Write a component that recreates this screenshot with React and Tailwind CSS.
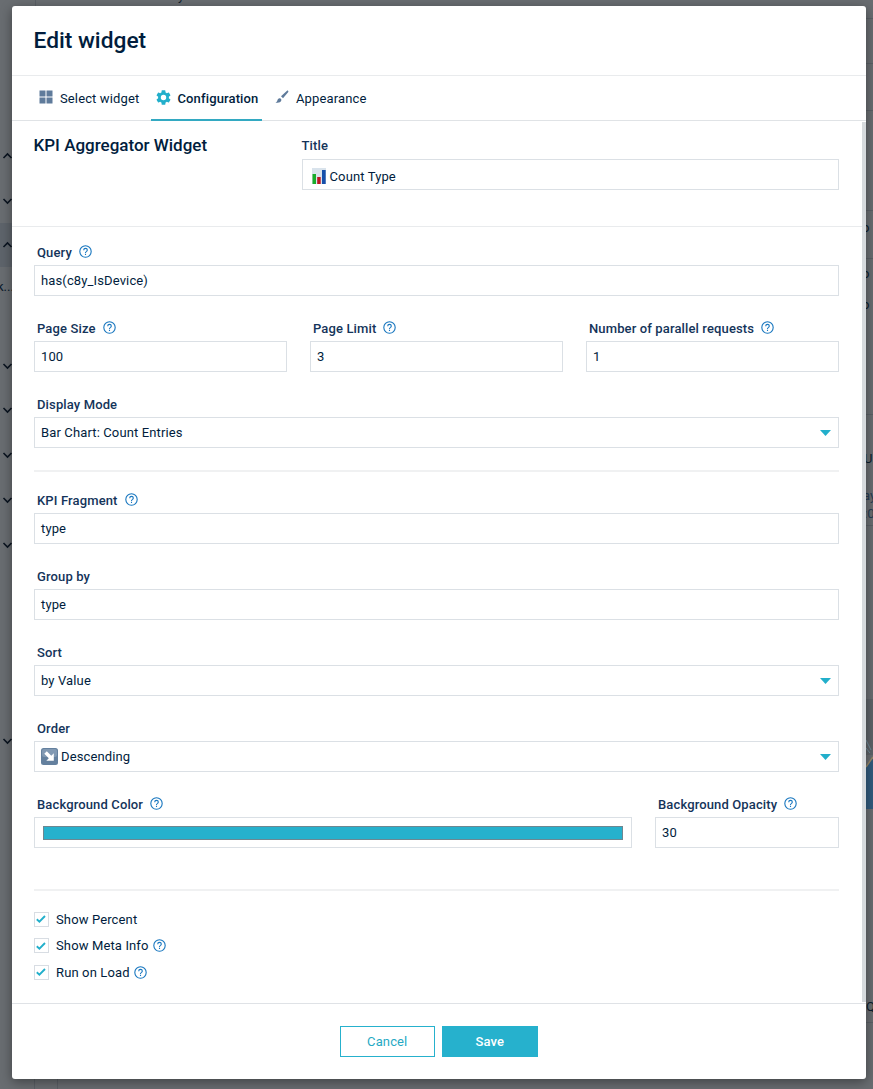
import React from "react";

function Help({ className = "" }) {
  return (
    <svg viewBox="0 0 13 13" className={`h-[13px] w-[13px] shrink-0 ${className}`} fill="none" stroke="#1776BF" strokeWidth="1.1">
      <circle cx="6.5" cy="6.5" r="5.7" />
      <path d="M4.7 5.2c0-1.1.8-1.8 1.8-1.8s1.8.7 1.8 1.7c0 .7-.4 1.1-.9 1.5-.5.3-.9.6-.9 1.2v.2M6.5 8.8v1.2" />
    </svg>
  );
}

function Label({ children, help }) {
  return (
    <div className="flex h-[26px] items-center pl-[3px] text-[13px] font-medium tracking-[0.13px] text-[#14345A]">
      <span className="pt-px">{children}</span>
      {help && <Help className="mb-px ml-[7px]" />}
    </div>
  );
}

function Field({ label, help, children, select, className = "" }) {
  return (
    <div className={className}>
      <Label help={help}>{label}</Label>
      <div className="flex h-[31px] items-center border border-[#DBE0E5] px-[6px] text-[13px] tracking-[0.13px] text-[#011D3D]">
        {children}
        {select && (
          <svg viewBox="0 0 12 6" className="ml-auto mr-px h-[6px] w-[11px]" fill="#22AFCB" preserveAspectRatio="none">
            <path d="M0 0h12L6 6z" />
          </svg>
        )}
      </div>
    </div>
  );
}

function Check({ children, help }) {
  return (
    <div className="flex h-[26.5px] items-center text-[13px] tracking-[0.13px] text-[#011D3D]">
      <span className="mr-[7px] flex h-[15px] w-[15px] items-center justify-center border border-[#D8DDE3]">
        <svg viewBox="0 0 10 8" className="mr-px h-2 w-[10px]" fill="none" stroke="#22AFCB" strokeWidth="1.9">
          <path d="M.8 4.2 3.4 6.6 9 1" />
        </svg>
      </span>
      <span>{children}</span>
      {help && <Help className="ml-1" />}
    </div>
  );
}

const chevrons = [
  [156, true],
  [201, false],
  [245, true],
  [366, false],
  [410, false],
  [455, false],
  [500, false],
  [545, false],
  [741, false],
];

function Backdrop() {
  return (
    <div className="absolute inset-0 overflow-hidden bg-[#696D71] text-[13px] text-[#0B1B2C]">
      <div className="absolute top-[223px] left-0 h-[44px] w-3 bg-[#5E646B]" />
      <svg className="absolute inset-0" width="873" height="1089" fill="none">
        {chevrons.map(([y, up]) => (
          <path key={y} d={up ? `M3.5 ${y + 2}l4-4 4 4` : `M3.5 ${y - 2}l4 4 4-4`} stroke="#0A1420" strokeWidth="1.6" />
        ))}
        <path d="M866 18.500h7M866 63.500h7M866 110.500h7M866 210.500h7M866 258.500h7M866 414.500h7M866 525.500h7M866 1022.500h7M35.500 0v6M34.500 1079v10M57.500 1079v10" stroke="#5B6066" />
        <path d="M866 699h7v56h-7z" fill="#5E6368" />
        <path d="M873 757l-7 9v43h7z" fill="#315B7E" />
        <path d="M866 767l7-10" stroke="#9A8867" strokeWidth="1.5" />
        <path d="M866 740l5 10M866 748l4 5" stroke="#6E8C9B" />
      </svg>
      <span className="absolute top-[277px] -left-[3px]">k...</span>
      <span className="absolute top-[-14px] left-[178px]">y</span>
      <span className="absolute top-[218px] left-[862px]">o</span>
      <span className="absolute top-[264px] left-[862px]">o</span>
      <span className="absolute top-[295px] left-[862px]">o</span>
      <span className="absolute top-[449px] left-[864px]">UI</span>
      <span className="absolute top-[486px] left-[863px] text-[#263B52]">ay</span>
      <span className="absolute top-[504px] left-[864px] text-[#263B52]">:0</span>
      <span className="absolute top-[997px] left-[866px]">Q</span>
    </div>
  );
}

export default function App() {
  return (
    <div className="relative h-[1089px] w-[873px] overflow-hidden pt-[6px] pl-[11.5px] font-['Roboto',sans-serif]">
      <Backdrop />
      <div className="relative flex h-[1073px] w-[854.5px] flex-col rounded-[3px] bg-white shadow-[0_3px_12px_rgba(0,0,0,0.4)]">
        <header className="flex h-[70px] shrink-0 items-center border-b border-[#E9EBED] pt-[2px] pl-[22px]">
          <h1 className="text-[22.75px] font-medium text-[#011D3D]">Edit widget</h1>
        </header>
        <nav className="flex h-[45px] shrink-0 border-b border-[#E0E3E6] text-[13px] tracking-[0.13px] text-[#011D3D]">
          <div className="ml-[27.5px] flex w-[112px] items-center">
            <svg viewBox="0 0 14 14" className="mr-[7px] mb-[2px] h-[14px] w-[14px]" fill="#5F7B9B">
              <path d="M.5.500h6v6h-6zM7.500.500h6v6h-6zM.5 7.500h6v6h-6zM7.500 7.500h6v6h-6z" />
            </svg>
            <span className="pt-px">Select widget</span>
          </div>
          <div className="-mb-px flex w-[111px] items-center border-b-2 border-[#33A9C2] pl-[4.5px] font-medium">
            <svg viewBox="2 2 20 20" className="mr-[7px] h-[15px] w-[15px]" fill="#22AFCB">
              <path d="M19.140 12.940c.04-.3.06-.61.06-.94 0-.32-.02-.64-.07-.94l2.030-1.580a.49.49 0 0 0 .12-.61l-1.920-3.320a.488.488 0 0 0-.59-.22l-2.390.96c-.5-.38-1.030-.7-1.620-.94L14.400 2.810a.484.484 0 0 0-.48-.41h-3.840c-.24 0-.43.17-.47.41L9.250 5.350c-.59.24-1.130.57-1.620.94l-2.390-.96a.48.48 0 0 0-.59.22L2.740 8.870c-.12.21-.08.47.12.61l2.030 1.580c-.05.3-.09.63-.09.94s.02.64.07.94l-2.030 1.580a.49.49 0 0 0-.12.61l1.920 3.320c.12.22.37.29.59.22l2.390-.96c.5.38 1.030.7 1.620.94l.36 2.540c.05.24.24.41.48.41h3.840c.24 0 .44-.17.47-.41l.36-2.540c.59-.24 1.130-.56 1.620-.94l2.390.96c.22.08.47 0 .59-.22l1.920-3.320a.49.49 0 0 0-.12-.61zM12 15.600A3.600 3.600 0 1 1 12 8.400a3.600 3.600 0 0 1 0 7.200z" />
            </svg>
            <span className="pt-[2px]">Configuration</span>
          </div>
          <div className="ml-[13px] flex items-center">
            <svg viewBox="0 0 14 14" className="mr-[7px] mb-[2px] h-[14px] w-[14px]" fill="#5F7B9B">
              <path d="M12 .7c.7-.4 1.700.5 1.300 1.200L8 8.200 6 6.300zM4.400 8.200c1.400-.2 2.300 1 1.900 2.300-.6 1.900-3.300 2.700-5.800 1.900 1.500-.5 1.700-1.200 2-2.300.2-1 .9-1.700 1.900-1.900z" />
            </svg>
            <span className="pt-px">Appearance</span>
          </div>
        </nav>
        <main className="flex h-[882px] shrink-0">
          <div className="w-[850.5px]">
            <section className="flex h-[106px] border-b border-[#E9EBED] pl-[22px]">
              <h2 className="mt-3 w-[268px] text-[17px] leading-6 font-medium text-[#011D3D]">KPI Aggregator Widget</h2>
              <div className="w-[537px] pt-3">
                <div className="h-[26px] pt-px text-[13px] leading-6 font-medium tracking-[0.13px] text-[#14345A]">Title</div>
                <div className="flex h-[31px] items-center border border-[#DBE0E5] pt-[3px] pl-[9px] text-[13px] tracking-[0.13px] text-[#011D3D]">
                  <svg viewBox="0 0 14 16" className="mr-1 h-4 w-[14px]">
                    <path d="M0 0h14v16H0z" fill="#D9E3EC" />
                    <path d="M.5 6h3.500v10H.5z" fill="#19AC2B" />
                    <path d="M5.200 9h3.500v7H5.200z" fill="#BD1622" />
                    <path d="M10 2h3.700v14H10z" fill="#164FAA" />
                  </svg>
                  <span className="pt-px">Count Type</span>
                </div>
              </div>
            </section>
            <section className="ml-[22.5px] w-[805px] pt-3">
              <Field label="Query" help className="mb-[19px]">has(c8y_IsDevice)</Field>
              <div className="mb-[19px] grid grid-cols-3 gap-[23px]">
                <Field label="Page Size" help>100</Field>
                <Field label="Page Limit" help>3</Field>
                <Field label="Number of parallel requests" help>1</Field>
              </div>
              <Field label="Display Mode" select>Bar Chart: Count Entries</Field>
              <hr className="mt-[22px] mb-[15px] border-t-2 border-[#F0F1F2]" />
              <Field label="KPI Fragment" help className="mb-[19px]">type</Field>
              <Field label="Group by" className="mb-[19px]">type</Field>
              <Field label="Sort" select className="mb-[19px]">by Value</Field>
              <Field label="Order" select className="mb-[19px]">
                <svg viewBox="0 0 17 17" className="mr-[3px] mb-px h-[17px] w-[17px]">
                  <rect width="17" height="17" rx="2.500" fill="#64809E" />
                  <rect x="1" y="1" width="15" height="8" rx="2" fill="#8199B3" />
                  <path d="M3.300 5.800 5.800 3.300 10.300 7.800 12.800 5.300v7.500H5.300L7.800 10.300z" fill="#fff" />
                </svg>
                <span>Descending</span>
              </Field>
              <div className="flex gap-[23px]">
                <Field label="Background Color" help className="w-[598px]">
                  <div className="mx-[2px] h-[14px] w-full border border-[#6D8791] bg-[#26B1CD]" />
                </Field>
                <Field label="Background Opacity" help className="w-[184px]">30</Field>
              </div>
              <hr className="mt-[41px] mb-[15px] border-t-2 border-[#F0F1F2]" />
              <Check>Show Percent</Check>
              <Check help>Show Meta Info</Check>
              <Check help>Run on Load</Check>
            </section>
          </div>
          <div className="mt-px h-[880px] w-1 bg-[#D6DADD]" />
        </main>
        <footer className="flex flex-1 justify-center gap-[7px] border-t border-[#DFE2E6] pt-[22px] text-[13px] tracking-[0.13px]">
          <button className="h-[31px] w-[95px] border border-[#26B1CD] text-[#26A9C4]">Cancel</button>
          <button className="h-[31px] w-[96px] bg-[#26B1CD] font-medium text-white">Save</button>
        </footer>
      </div>
    </div>
  );
}
